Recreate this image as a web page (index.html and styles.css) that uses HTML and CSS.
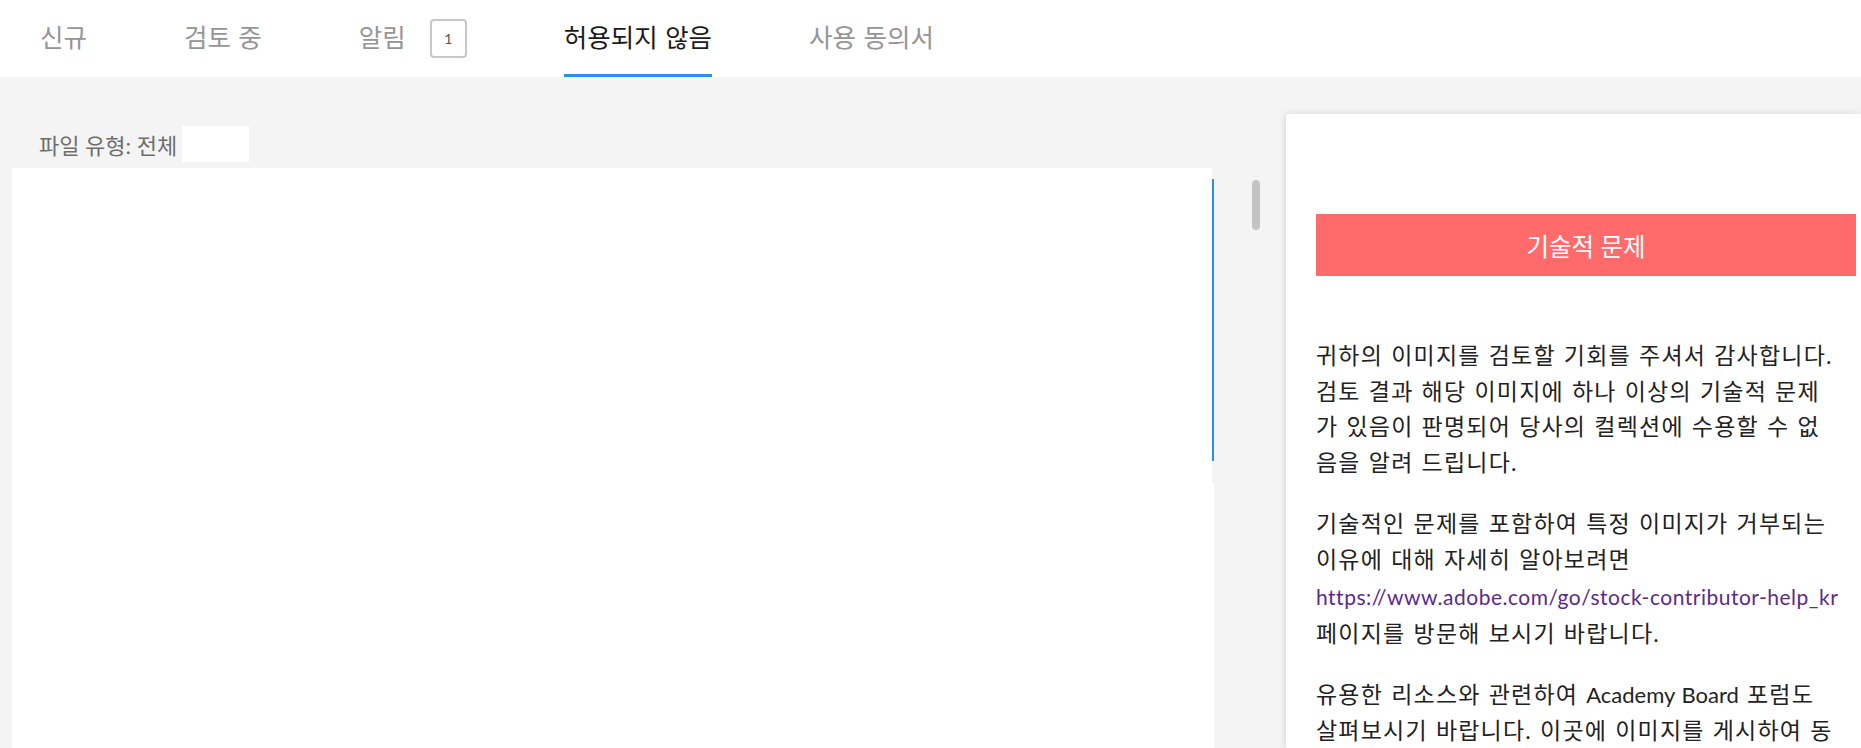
FILE: index.html
```html
<!DOCTYPE html>
<html lang="ko">
<head>
<meta charset="utf-8">
<title>허용되지 않음</title>
<link rel="stylesheet" href="styles.css">
</head>
<body>
<header class="tabs">
  <a class="tab">신규</a>
  <a class="tab">검토 중</a>
  <a class="tab">알림<span class="badge">1</span></a>
  <a class="tab active">허용되지 않음</a>
  <a class="tab">사용 동의서</a>
</header>
<main class="content">
  <section class="left">
    <div class="filter"><span class="filter-label">파일 유형: 전체</span><span class="select"></span></div>
    <div class="grid-top"><div class="grid-scroll"></div></div>
    <div class="grid-bottom"></div>
  </section>
  <div class="scrollbar"><div class="thumb"></div></div>
  <aside class="detail">
    <div class="reason">기술적 문제</div>
    <p>귀하의 이미지를 검토할 기회를 주셔서 감사합니다.<br>검토 결과 해당 이미지에 하나 이상의 기술적 문제<br>가 있음이 판명되어 당사의 컬렉션에 수용할 수 없<br>음을 알려 드립니다.</p>
    <p>기술적인 문제를 포함하여 특정 이미지가 거부되는<br>이유에 대해 자세히 알아보려면<br><a href="#">https://www.adobe.com/go/stock-contributor-help_kr</a><br>페이지를 방문해 보시기 바랍니다.</p>
    <p>유용한 리소스와 관련하여 <span class="latin">Academy Board</span> 포럼도<br>살펴보시기 바랍니다. 이곳에 이미지를 게시하여 동<br>료 기여자들의 피드백을 받을 수 있습니다.</p>
  </aside>
</main>
</body>
</html>
```
FILE: styles.css
```css
html, body {
  margin: 0;
  height: 100%;
  overflow: hidden;
}
body {
  background: #f4f4f4;
  font-family: Lato, "Noto Sans CJK KR", sans-serif;
}
.tabs {
  background: #fff;
  height: 77px;
  display: flex;
  padding-left: 40px;
  gap: 97px;
}
.tab {
  display: flex;
  align-items: center;
  box-sizing: border-box;
  height: 77px;
  padding-bottom: 4px;
  border-bottom: 3px solid transparent;
  font-size: 25.5px;
  color: #959595;
  word-spacing: 1px;
  cursor: pointer;
}
.tab.active {
  color: #1b1b1b;
  border-bottom-color: #2d8ef0;
}
.badge {
  margin-left: 24px;
  margin-top: 7px;
  width: 37px;
  height: 39px;
  box-sizing: border-box;
  border: 2px solid #c8c8c8;
  border-radius: 4px;
  display: flex;
  align-items: center;
  justify-content: center;
  font-size: 14px;
  color: #555;
}
.content {
  display: flex;
  align-items: flex-start;
  height: calc(100% - 77px);
}
.left {
  margin-left: 12px;
  width: 1202px;
  height: 100%;
  padding-top: 49px;
  box-sizing: border-box;
  display: flex;
  flex-direction: column;
}
.filter {
  display: flex;
  align-items: center;
  gap: 5px;
  height: 36px;
  padding-left: 27px;
}
.filter-label {
  font-size: 22px;
  color: #6e6e6e;
}
.select {
  width: 67px;
  height: 36px;
  background: #fff;
}
.grid-top {
  margin-top: 6px;
  margin-right: 2px;
  height: 315px;
  box-sizing: border-box;
  padding: 11px 0 22px;
  background: #fff;
  display: flex;
}
.grid-scroll {
  flex: 1;
  border-right: 2px solid #2d8ef0;
  margin-right: -2px;
}
.grid-bottom {
  flex: 1;
  background: #fff;
}
.scrollbar {
  margin-left: 38px;
  padding-top: 103px;
}
.thumb {
  width: 8px;
  height: 50px;
  border-radius: 4px;
  background: #c4c4c4;
}
.detail {
  align-self: stretch;
  flex: 1;
  margin: 37px 0 0 26px;
  padding: 100px 5px 0 30px;
  background: #fff;
  box-shadow: -1px 0 6px rgba(0, 0, 0, 0.13);
}
.reason {
  height: 62px;
  display: flex;
  align-items: center;
  justify-content: center;
  margin-bottom: 62px;
  background: #ff6b6b;
  color: #fff;
  font-size: 24.5px;
}
.detail p {
  margin: 0 0 25px;
  font-size: 23px;
  line-height: 35.7px;
  color: #222;
  letter-spacing: 1.2px;
  word-spacing: 1px;
  white-space: nowrap;
}
.detail .latin {
  letter-spacing: 0;
  font-size: 22px;
}
.detail a {
  font-size: 21px;
  line-height: 39px;
  color: #5a2a91;
  text-decoration: none;
  letter-spacing: 0.5px;
  word-spacing: 0;
}
```
